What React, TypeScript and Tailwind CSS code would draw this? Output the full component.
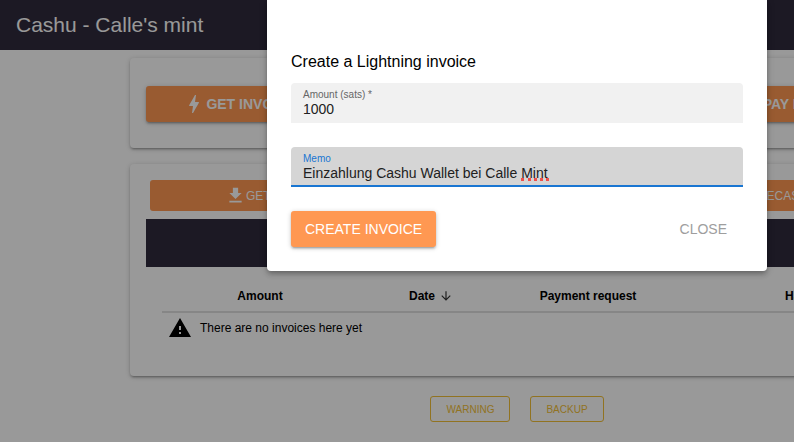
import { useState } from "react";
import type { ReactNode } from "react";
import { MdArrowDownward, MdBolt, MdFileDownload, MdFileUpload, MdWarning } from "react-icons/md";

const raised =
  "shadow-[0_1px_5px_rgba(0,0,0,0.2),0_2px_2px_rgba(0,0,0,0.14),0_3px_1px_-2px_rgba(0,0,0,0.12)]";

function Card({ className, children }: { className: string; children: ReactNode }) {
  return <section className={`rounded bg-white px-4 ${raised} ${className}`}>{children}</section>;
}

function InvoiceButton({ children }: { children: ReactNode }) {
  return (
    <button
      type="button"
      className={`flex h-9 w-[187px] items-center justify-center rounded-[3px] bg-[#ff9852] text-sm font-bold text-white ${raised}`}
    >
      <MdBolt className="size-6" />
      {children}
    </button>
  );
}

function EcashButton({ icon, children }: { icon: ReactNode; children: ReactNode }) {
  return (
    <button
      type="button"
      className="flex h-[31px] w-60 items-center justify-center rounded-[3px] bg-[#ff9852] text-xs text-white"
    >
      {icon}
      {children}
    </button>
  );
}

function OutlineButton({ children }: { children: ReactNode }) {
  return (
    <button
      type="button"
      className="h-[26px] rounded-[3px] border border-[#f2c037] px-[15px] text-[10px] text-[#f2c037]"
    >
      {children}
    </button>
  );
}

function InvoiceDialog() {
  const [amount, setAmount] = useState("1000");
  const [memo, setMemo] = useState("Einzahlung Cashu Wallet bei Calle Mint");

  return (
    <form
      role="dialog"
      aria-labelledby="dialog-title"
      onSubmit={(e) => e.preventDefault()}
      className="w-[500px] rounded-b bg-white px-6 pt-[50px] pb-6 shadow-[0_2px_4px_-1px_rgba(0,0,0,0.2),0_4px_5px_rgba(0,0,0,0.14),0_1px_10px_rgba(0,0,0,0.12)]"
    >
      <h2 id="dialog-title" className="mb-[9px] text-base leading-6">
        Create a Lightning invoice
      </h2>

      <div className="flex h-10 flex-col rounded-t bg-[#f1f1f1] px-3 pt-1.5">
        <label htmlFor="amount" className="text-[10px] leading-3 text-[#666]">
          Amount (sats) *
        </label>
        <input
          id="amount"
          value={amount}
          onChange={(e) => setAmount(e.target.value)}
          className="h-4 w-full bg-transparent text-sm leading-4 text-[#212121] outline-none"
        />
      </div>

      <div className="relative mt-6 flex h-10 flex-col rounded-t border-b-2 border-[#1976d2] bg-[#d5d5d5] px-3 pt-1.5">
        <label htmlFor="memo" className="text-[10px] leading-3 text-[#1976d2]">
          Memo
        </label>
        <input
          id="memo"
          value={memo}
          spellCheck={false}
          onChange={(e) => setMemo(e.target.value)}
          className="h-4 w-full bg-transparent text-sm leading-4 text-[#212121] outline-none"
        />
        <span
          aria-hidden="true"
          className="absolute top-[31px] left-[230px] w-7 border-t-[3px] border-dotted border-[#f0504a]"
        />
      </div>

      <div className="mt-6 flex items-center justify-between">
        <button
          type="submit"
          className={`h-9 rounded-[3px] bg-[#ff9852] px-3.5 text-sm text-white ${raised}`}
        >
          CREATE INVOICE
        </button>
        <button type="button" className="h-9 px-4 text-sm text-[#9e9e9e]">
          CLOSE
        </button>
      </div>
    </form>
  );
}

export default function App() {
  return (
    <div className="h-screen overflow-hidden font-['Liberation_Sans',Arial,sans-serif] text-black">
      <div className="relative min-h-screen min-w-[1034px] bg-white">
        <header className="flex h-[50px] items-center bg-[#302b3c] px-4">
          <h1 className="text-[21px] text-white">Cashu - Calle's mint</h1>
        </header>

        <main className="mx-auto mt-2 flex w-[774px] flex-col gap-4">
          <Card className="flex justify-between pt-7 pb-[26px]">
            <InvoiceButton>GET INVOICE</InvoiceButton>
            <InvoiceButton>PAY INVOICE</InvoiceButton>
          </Card>

          <Card className="pt-4 pb-[34px]">
            <div className="flex justify-between px-1">
              <EcashButton icon={<MdFileDownload className="size-[21px]" />}>GET ECASH</EcashButton>
              <EcashButton icon={<MdFileUpload className="size-[21px]" />}>PAY ECASH</EcashButton>
            </div>
            <div className="mt-2 h-12 bg-[#302b3c]" />
            <div className="px-4 pt-3.5">
              <table className="w-full table-fixed text-xs">
                <thead>
                  <tr className="h-[31px] border-b-2 border-[#dfdfdf]">
                    <th className="w-[196px] font-bold">Amount</th>
                    <th className="w-[146px] font-bold">
                      <span className="flex items-center justify-center gap-1">
                        Date <MdArrowDownward className="size-3.5 opacity-80" />
                      </span>
                    </th>
                    <th className="w-[168px] font-bold">Payment request</th>
                    <th className="pl-[113px] text-left font-bold">Hash</th>
                  </tr>
                </thead>
                <tbody>
                  <tr className="h-[30px]">
                    <td colSpan={4}>
                      <span className="flex items-center gap-2 pl-1.5">
                        <MdWarning className="size-6" />
                        There are no invoices here yet
                      </span>
                    </td>
                  </tr>
                </tbody>
              </table>
            </div>
          </Card>

          <div className="mt-1 flex justify-center gap-5">
            <OutlineButton>WARNING</OutlineButton>
            <OutlineButton>BACKUP</OutlineButton>
          </div>
        </main>

        <div className="absolute inset-0 flex items-start justify-center bg-black/40">
          <InvoiceDialog />
        </div>
      </div>
    </div>
  );
}
